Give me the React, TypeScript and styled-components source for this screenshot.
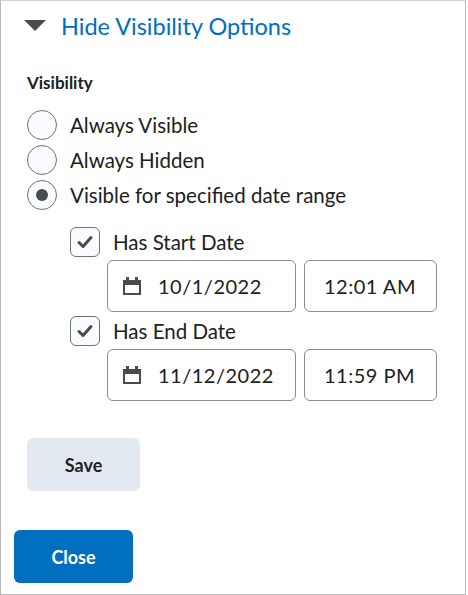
import React from 'react';
import styled, { createGlobalStyle } from 'styled-components';

const Global = createGlobalStyle`
  html, body { margin: 0; padding: 0; background: #fff; }
  body { font-family: Lato, "Noto Sans", sans-serif; color: #202122; }
`;

const Frame = styled.div`
  box-sizing: border-box;
  width: 466px;
  height: 595px;
  border: 1px solid #b8b8b8;
  border-top-color: #d0d0d0;
`;

const Header = styled.div`
  display: flex;
  align-items: center;
  height: 50px;
  padding-left: 23px;
  gap: 15px;
`;

const Title = styled.span`
  font-size: 23.5px;
  color: #006fbf;
`;

const Body = styled.div`
  padding: 21px 0 0 26px;
`;

const Label = styled.div`
  font-size: 17px;
  font-weight: 700;
  margin-bottom: 14px;
`;

const Row = styled.div<{ $indent?: number; $h?: number }>`
  display: flex;
  align-items: center;
  gap: 13px;
  height: ${p => p.$h ?? 35}px;
  margin-left: ${p => p.$indent ?? 0}px;
  font-size: 20.5px;
`;

const Radio = styled.span<{ $on?: boolean }>`
  box-sizing: border-box;
  width: 30px;
  height: 30px;
  border-radius: 50%;
  border: 1px solid #6e7376;
  background: #f9fbff;
  display: flex;
  align-items: center;
  justify-content: center;
  &::after {
    content: '';
    display: ${p => (p.$on ? 'block' : 'none')};
    width: 12px;
    height: 12px;
    border-radius: 50%;
    background: #494c4e;
  }
`;

const Check = styled.span`
  box-sizing: border-box;
  width: 30px;
  height: 30px;
  border-radius: 6px;
  border: 1px solid #6e7376;
  background: #f9fbff;
  display: flex;
  align-items: center;
  justify-content: center;
`;

const Inputs = styled.div`
  display: flex;
  gap: 8px;
  margin: 2px 0 2px 80px;
`;

const Field = styled.div<{ $w: number }>`
  box-sizing: border-box;
  width: ${p => p.$w}px;
  height: 52px;
  border: 1px solid #868c8f;
  border-radius: 6px;
  display: flex;
  align-items: center;
  gap: 16px;
  padding-left: ${p => (p.$w > 150 ? 14 : 19)}px;
  font-size: 20px;
  letter-spacing: 0.5px;
`;

const Button = styled.button<{ $primary?: boolean }>`
  font-family: inherit;
  font-size: 18px;
  font-weight: 700;
  height: 53px;
  border: none;
  border-radius: 6px;
  background: ${p => (p.$primary ? '#006fbf' : '#e3e9f1')};
  color: ${p => (p.$primary ? '#fff' : '#202122')};
  display: block;
`;

const SaveWrap = styled.div`
  margin-top: 37px;
`;

const CloseWrap = styled.div`
  margin: 39px 0 0 13px;
`;

const Tick = () => (
  <svg width="18" height="18" viewBox="0 0 18 18">
    <path d="M3 9.5l4 4 8-9" fill="none" stroke="#494c4e" strokeWidth="3" strokeLinecap="round" strokeLinejoin="round" />
  </svg>
);

const Cal = () => (
  <svg width="20" height="20" viewBox="0 0 20 20">
    <rect x="1" y="4" width="18" height="15" fill="#494c4e" />
    <rect x="3" y="9" width="14" height="8" fill="#fff" />
    <rect x="4" y="1" width="3" height="5" fill="#494c4e" />
    <rect x="13" y="1" width="3" height="5" fill="#494c4e" />
  </svg>
);

const DateRow = ({ date, time }: { date: string; time: string }) => (
  <Inputs>
    <Field $w={189}>
      <Cal />
      {date}
    </Field>
    <Field $w={133}>{time}</Field>
  </Inputs>
);

export default function App() {
  return (
    <Frame>
      <Global />
      <Header>
        <svg width="22" height="12" viewBox="0 0 22 12">
          <path d="M0 0h22L11 11z" fill="#494c4e" />
        </svg>
        <Title>Hide Visibility Options</Title>
      </Header>
      <Body>
        <Label>Visibility</Label>
        <Row>
          <Radio />
          Always Visible
        </Row>
        <Row>
          <Radio />
          Always Hidden
        </Row>
        <Row>
          <Radio $on />
          Visible for specified date range
        </Row>
        <Row $indent={43} $h={33} style={{ marginTop: 13 }}>
          <Check>
            <Tick />
          </Check>
          Has Start Date
        </Row>
        <DateRow date="10/1/2022" time="12:01 AM" />
        <Row $indent={43} $h={33}>
          <Check>
            <Tick />
          </Check>
          Has End Date
        </Row>
        <DateRow date="11/12/2022" time="11:59 PM" />
        <SaveWrap>
          <Button style={{ width: 113 }}>Save</Button>
        </SaveWrap>
      </Body>
      <CloseWrap>
        <Button $primary style={{ width: 119 }}>Close</Button>
      </CloseWrap>
    </Frame>
  );
}
